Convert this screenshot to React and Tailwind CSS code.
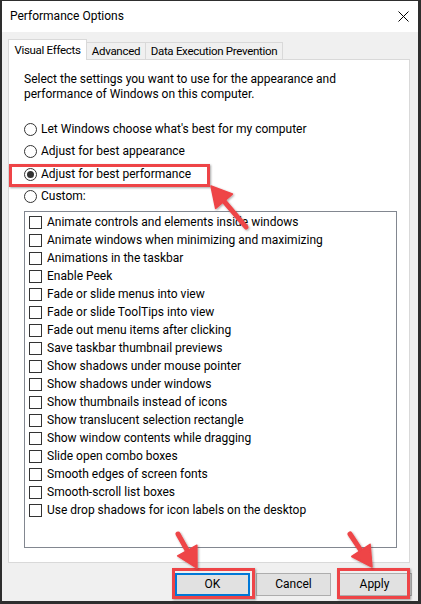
import React from "react";

const items = [
  "Animate controls and elements inside windows",
  "Animate windows when minimizing and maximizing",
  "Animations in the taskbar",
  "Enable Peek",
  "Fade or slide menus into view",
  "Fade or slide ToolTips into view",
  "Fade out menu items after clicking",
  "Save taskbar thumbnail previews",
  "Show shadows under mouse pointer",
  "Show shadows under windows",
  "Show thumbnails instead of icons",
  "Show translucent selection rectangle",
  "Show window contents while dragging",
  "Slide open combo boxes",
  "Smooth edges of screen fonts",
  "Smooth-scroll list boxes",
  "Use drop shadows for icon labels on the desktop",
];

const radios = [
  ["Let Windows choose what's best for my computer", false],
  ["Adjust for best appearance", false],
  ["Adjust for best performance", true],
  ["Custom:", false],
];

function Arrow({ t, p, L = 20, W = 22 }) {
  const dx = p[0] - t[0];
  const dy = p[1] - t[1];
  const len = Math.hypot(dx, dy);
  const ux = dx / len;
  const uy = dy / len;
  const nx = -uy;
  const ny = ux;
  const bx = p[0] - ux * L;
  const by = p[1] - uy * L;
  const pts = `${p[0]},${p[1]} ${bx + (nx * W) / 2},${by + (ny * W) / 2} ${bx - (nx * W) / 2},${by - (ny * W) / 2}`;
  return (
    <g>
      <line x1={t[0]} y1={t[1]} x2={bx + ux * 2} y2={by + uy * 2} stroke="#ee4447" strokeWidth="5" strokeLinecap="round" />
      <polygon points={pts} fill="#ee4447" stroke="#ee4447" strokeWidth="1.5" strokeLinejoin="round" />
    </g>
  );
}

export default function App() {
  return (
    <div className="relative w-[421px] h-[604px] overflow-hidden border-l-2 border-t border-r-[3px] border-b-[3px] border-[#2e2e2e] flex flex-col font-['Roboto',sans-serif] text-[12px] text-black leading-[15px]">
      <div className="h-[31px] bg-white flex items-center justify-between pl-[8px] pr-[9px] shrink-0">
        <span>Performance Options</span>
        <svg width="11" height="11" viewBox="0 0 11 11">
          <path d="M0.5 0.5 L10.5 10.5 M10.5 0.5 L0.5 10.5" stroke="#000" strokeWidth="1" />
        </svg>
      </div>
      <div className="flex-1 bg-[#f0f0f0] pl-[6px] pr-[8px] flex flex-col">
        <div className="mt-[7px] flex items-end whitespace-nowrap text-[11.5px] tracking-[-0.3px]">
          <div className="relative z-10 -mb-px h-[21px] w-[79px] shrink-0 bg-white border border-b-0 border-[#d9d9d9] flex items-center justify-center">
            Visual Effects
          </div>
          <div className="h-[17px] w-[59px] shrink-0 border-t border-r border-[#d9d9d9] flex items-center justify-center">
            Advanced
          </div>
          <div className="h-[17px] w-[137px] shrink-0 border-t border-r border-[#d9d9d9] flex items-center justify-center">
            Data Execution Prevention
          </div>
        </div>
        <div className="h-[504px] bg-white border border-[#d9d9d9] pl-[15px] pt-[12px] flex flex-col whitespace-nowrap">
          <p>
            Select the settings you want to use for the appearance and
            <br />
            performance of Windows on this computer.
          </p>
          <div className="mt-[16px] flex flex-col">
            {radios.map(([label, on]) => (
              <div key={label} className="h-[22.5px] flex items-center">
                <span className="w-[13px] h-[13px] rounded-full border border-[#333] bg-white flex items-center justify-center shrink-0">
                  {on && <span className="w-[7px] h-[7px] rounded-full bg-[#333]" />}
                </span>
                <span className="ml-[4px]">{label}</span>
              </div>
            ))}
          </div>
          <div className="mt-[3px] w-[373px] h-[337px] border border-[#828790] pt-[1px] pl-[4px]">
            {items.map((it) => (
              <div key={it} className="h-[18px] flex items-center">
                <span className="w-[13px] h-[13px] border border-[#333] bg-white shrink-0" />
                <span className="ml-[5px]">{it}</span>
              </div>
            ))}
          </div>
        </div>
        <div className="mt-[10px] -mr-[2px] flex justify-end gap-[6px]">
          <button className="w-[75px] h-[23px] bg-[#e1e1e1] border-2 border-[#0078d7] flex items-center justify-center">OK</button>
          <button className="w-[75px] h-[23px] bg-[#e1e1e1] border border-[#adadad] flex items-center justify-center">Cancel</button>
          <button className="w-[75px] h-[23px] bg-[#e1e1e1] border border-[#adadad] flex items-center justify-center">Apply</button>
        </div>
      </div>

      <div className="absolute left-[7px] top-[163px] w-[201px] h-[23px] border-[3px] border-[#ee4447] shadow-[1px_1px_2px_rgba(0,0,0,0.35)]" />
      <div className="absolute left-[170px] top-[567px] w-[83px] h-[31px] border-[3px] border-[#ee4447] shadow-[1px_1px_2px_rgba(0,0,0,0.35)]" />
      <div className="absolute left-[335px] top-[567px] w-[73px] h-[31px] border-[3px] border-[#ee4447] shadow-[1px_1px_2px_rgba(0,0,0,0.35)]" />

      <svg className="absolute -left-[2px] -top-px w-[421px] h-[604px] pointer-events-none" viewBox="0 0 421 604">
        <defs>
          <filter id="sh" x="-20%" y="-20%" width="140%" height="140%">
            <feDropShadow dx="1" dy="1" stdDeviation="1" floodColor="#000" floodOpacity="0.35" />
          </filter>
        </defs>
        <g filter="url(#sh)">
          <Arrow t={[246, 227]} p={[211, 186]} />
          <Arrow t={[178, 534]} p={[197, 568]} />
          <Arrow t={[350, 534]} p={[372, 567]} />
        </g>
      </svg>
    </div>
  );
}
